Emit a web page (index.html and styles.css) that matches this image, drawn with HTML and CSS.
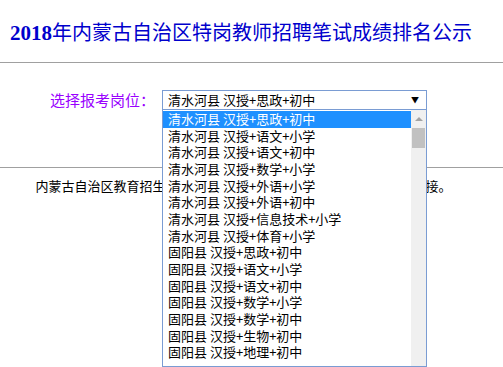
FILE: index.html
```html
<!DOCTYPE html>
<html lang="zh-CN">
<head>
  <meta charset="UTF-8">
  <meta name="viewport" content="width=device-width, initial-scale=1.0">
  <title>2018年内蒙古自治区特岗教师招聘笔试成绩排名公示</title>
  <link rel="stylesheet" href="styles.css">
</head>
<body>
  <header class="page-head">
    <h1><span class="year">2018</span>年内蒙古自治区特岗教师招聘笔试成绩排名公示</h1>
  </header>
  <section class="filter">
    <label class="filter-label" for="post">选择报考岗位：</label>
    <div class="picker">
      <div class="picker-box" id="post">
        <span>清水河县 汉授+思政+初中</span>
        <span class="picker-arrow">▼</span>
      </div>
      <div class="picker-list">
        <ul id="postList"></ul>
        <div class="scroll">
          <span class="scroll-up"></span>
          <span class="scroll-thumb"></span>
        </div>
      </div>
    </div>
  </section>
  <section class="notice">
    <p>内蒙古自治区教育招生考试中心提供成绩查询，详情请见官方网站链接。</p>
  </section>
  <script>
    const posts = [
      '清水河县 汉授+思政+初中',
      '清水河县 汉授+语文+小学',
      '清水河县 汉授+语文+初中',
      '清水河县 汉授+数学+小学',
      '清水河县 汉授+外语+小学',
      '清水河县 汉授+外语+初中',
      '清水河县 汉授+信息技术+小学',
      '清水河县 汉授+体育+小学',
      '固阳县 汉授+思政+初中',
      '固阳县 汉授+语文+小学',
      '固阳县 汉授+语文+初中',
      '固阳县 汉授+数学+小学',
      '固阳县 汉授+数学+初中',
      '固阳县 汉授+生物+初中',
      '固阳县 汉授+地理+初中'
    ];
    const ul = document.getElementById('postList');
    posts.forEach((post, index) => {
      const li = document.createElement('li');
      li.textContent = post;
      if (index === 0) li.className = 'selected';
      ul.appendChild(li);
    });
  </script>
</body>
</html>
```

FILE: styles.css
```css
body {
  margin: 0;
  min-height: 100vh;
  font-family: "Noto Sans CJK SC", sans-serif;
  background: #fff;
  color: #000;
}
.page-head {
  padding: 22px 10px 0;
  height: 40px;
  border-bottom: 1px solid #a0a0a0;
}
.page-head h1 {
  margin: 0;
  font-size: 20px;
  font-weight: normal;
  line-height: 20px;
  white-space: nowrap;
  color: #0000cc;
}
.page-head .year {
  font-family: "Liberation Serif", serif;
  font-size: 21px;
  font-weight: bold;
}
.filter {
  display: flex;
  align-items: flex-start;
  gap: 7px;
  height: 104px;
  padding-left: 50px;
  border-bottom: 1px solid #a0a0a0;
}
.filter-label {
  margin-top: 27px;
  font-size: 15px;
  line-height: 20px;
  color: #9900ff;
}
.picker {
  position: relative;
  margin-top: 27px;
  width: 265px;
  font-size: 13px;
}
.picker-box {
  display: flex;
  justify-content: space-between;
  align-items: center;
  height: 18px;
  padding: 0 7px 0 5px;
  border: 1px solid #7a9cd3;
  line-height: 18px;
}
.picker-arrow {
  font-size: 8px;
}
.picker-list {
  position: absolute;
  top: 20px;
  left: 0;
  width: 263px;
  height: 256px;
  display: flex;
  background: #fff;
  border: 1px solid #7a9cd3;
  border-top: none;
  z-index: 5;
}
.picker-list ul {
  flex: 1;
  margin: 0;
  padding: 1px 0 0;
  list-style: none;
}
.picker-list li {
  height: 16.66px;
  line-height: 16.66px;
  padding-left: 5px;
  white-space: nowrap;
}
.picker-list li.selected {
  background: #1e90ff;
  color: #fff;
}
.scroll {
  width: 15px;
  background: #f0f0f0;
  display: flex;
  flex-direction: column;
  align-items: center;
}
.scroll-up {
  margin-top: 7px;
  border-left: 4px solid transparent;
  border-right: 4px solid transparent;
  border-bottom: 4px solid #a3a3a3;
}
.scroll-thumb {
  margin-top: 7px;
  width: 13px;
  height: 20px;
  background: #c1c1c1;
}
.notice p {
  margin: 0;
  padding: 9px 16px 0 0;
  text-align: center;
  font-size: 13px;
  line-height: 18px;
}
```
